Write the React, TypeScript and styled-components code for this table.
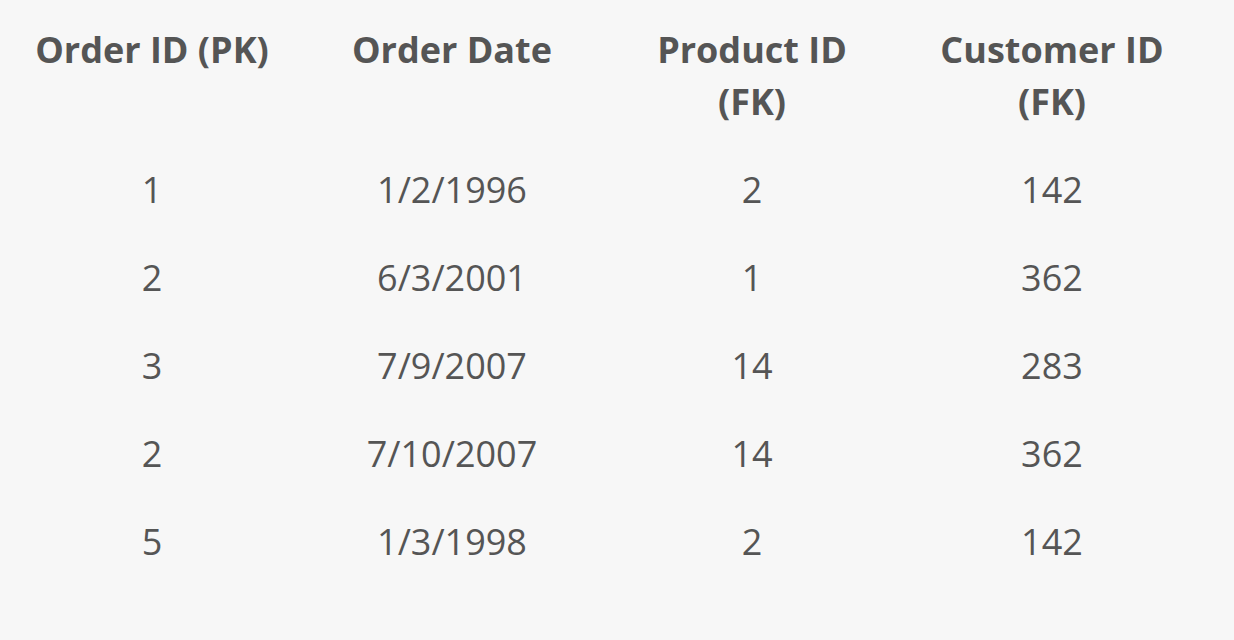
import React from "react";
import styled, { createGlobalStyle } from "styled-components";

const Global = createGlobalStyle`
  html, body { margin: 0; padding: 0; background: #f7f7f7; }
  body { font-family: "Open Sans", "Noto Sans", sans-serif; color: #555555; }
`;

const Page = styled.div`
  width: 1234px;
  height: 640px;
  background: #f7f7f7;
  padding-left: 2px;
  box-sizing: border-box;
`;

const Table = styled.div`
  display: grid;
  grid-template-columns: repeat(4, 300px);
`;

const HeadCell = styled.div`
  font-size: 36px;
  font-weight: 700;
  line-height: 52px;
  text-align: center;
  padding: 24px 20px 18px;
  color: #555555;
`;

const Cell = styled.div`
  font-size: 36px;
  font-weight: 400;
  height: 88px;
  line-height: 88px;
  text-align: center;
  color: #555555;
`;

const headers = ["Order ID (PK)", "Order Date", "Product ID (FK)", "Customer ID (FK)"];
const rows = [
  ["1", "1/2/1996", "2", "142"],
  ["2", "6/3/2001", "1", "362"],
  ["3", "7/9/2007", "14", "283"],
  ["2", "7/10/2007", "14", "362"],
  ["5", "1/3/1998", "2", "142"],
];

export default function App() {
  return (
    <>
      <Global />
      <Page>
        <Table>
          {headers.map((h) => (
            <HeadCell key={h}>{h}</HeadCell>
          ))}
          {rows.map((r, i) =>
            r.map((c, j) => <Cell key={`${i}-${j}`}>{c}</Cell>)
          )}
        </Table>
      </Page>
    </>
  );
}
